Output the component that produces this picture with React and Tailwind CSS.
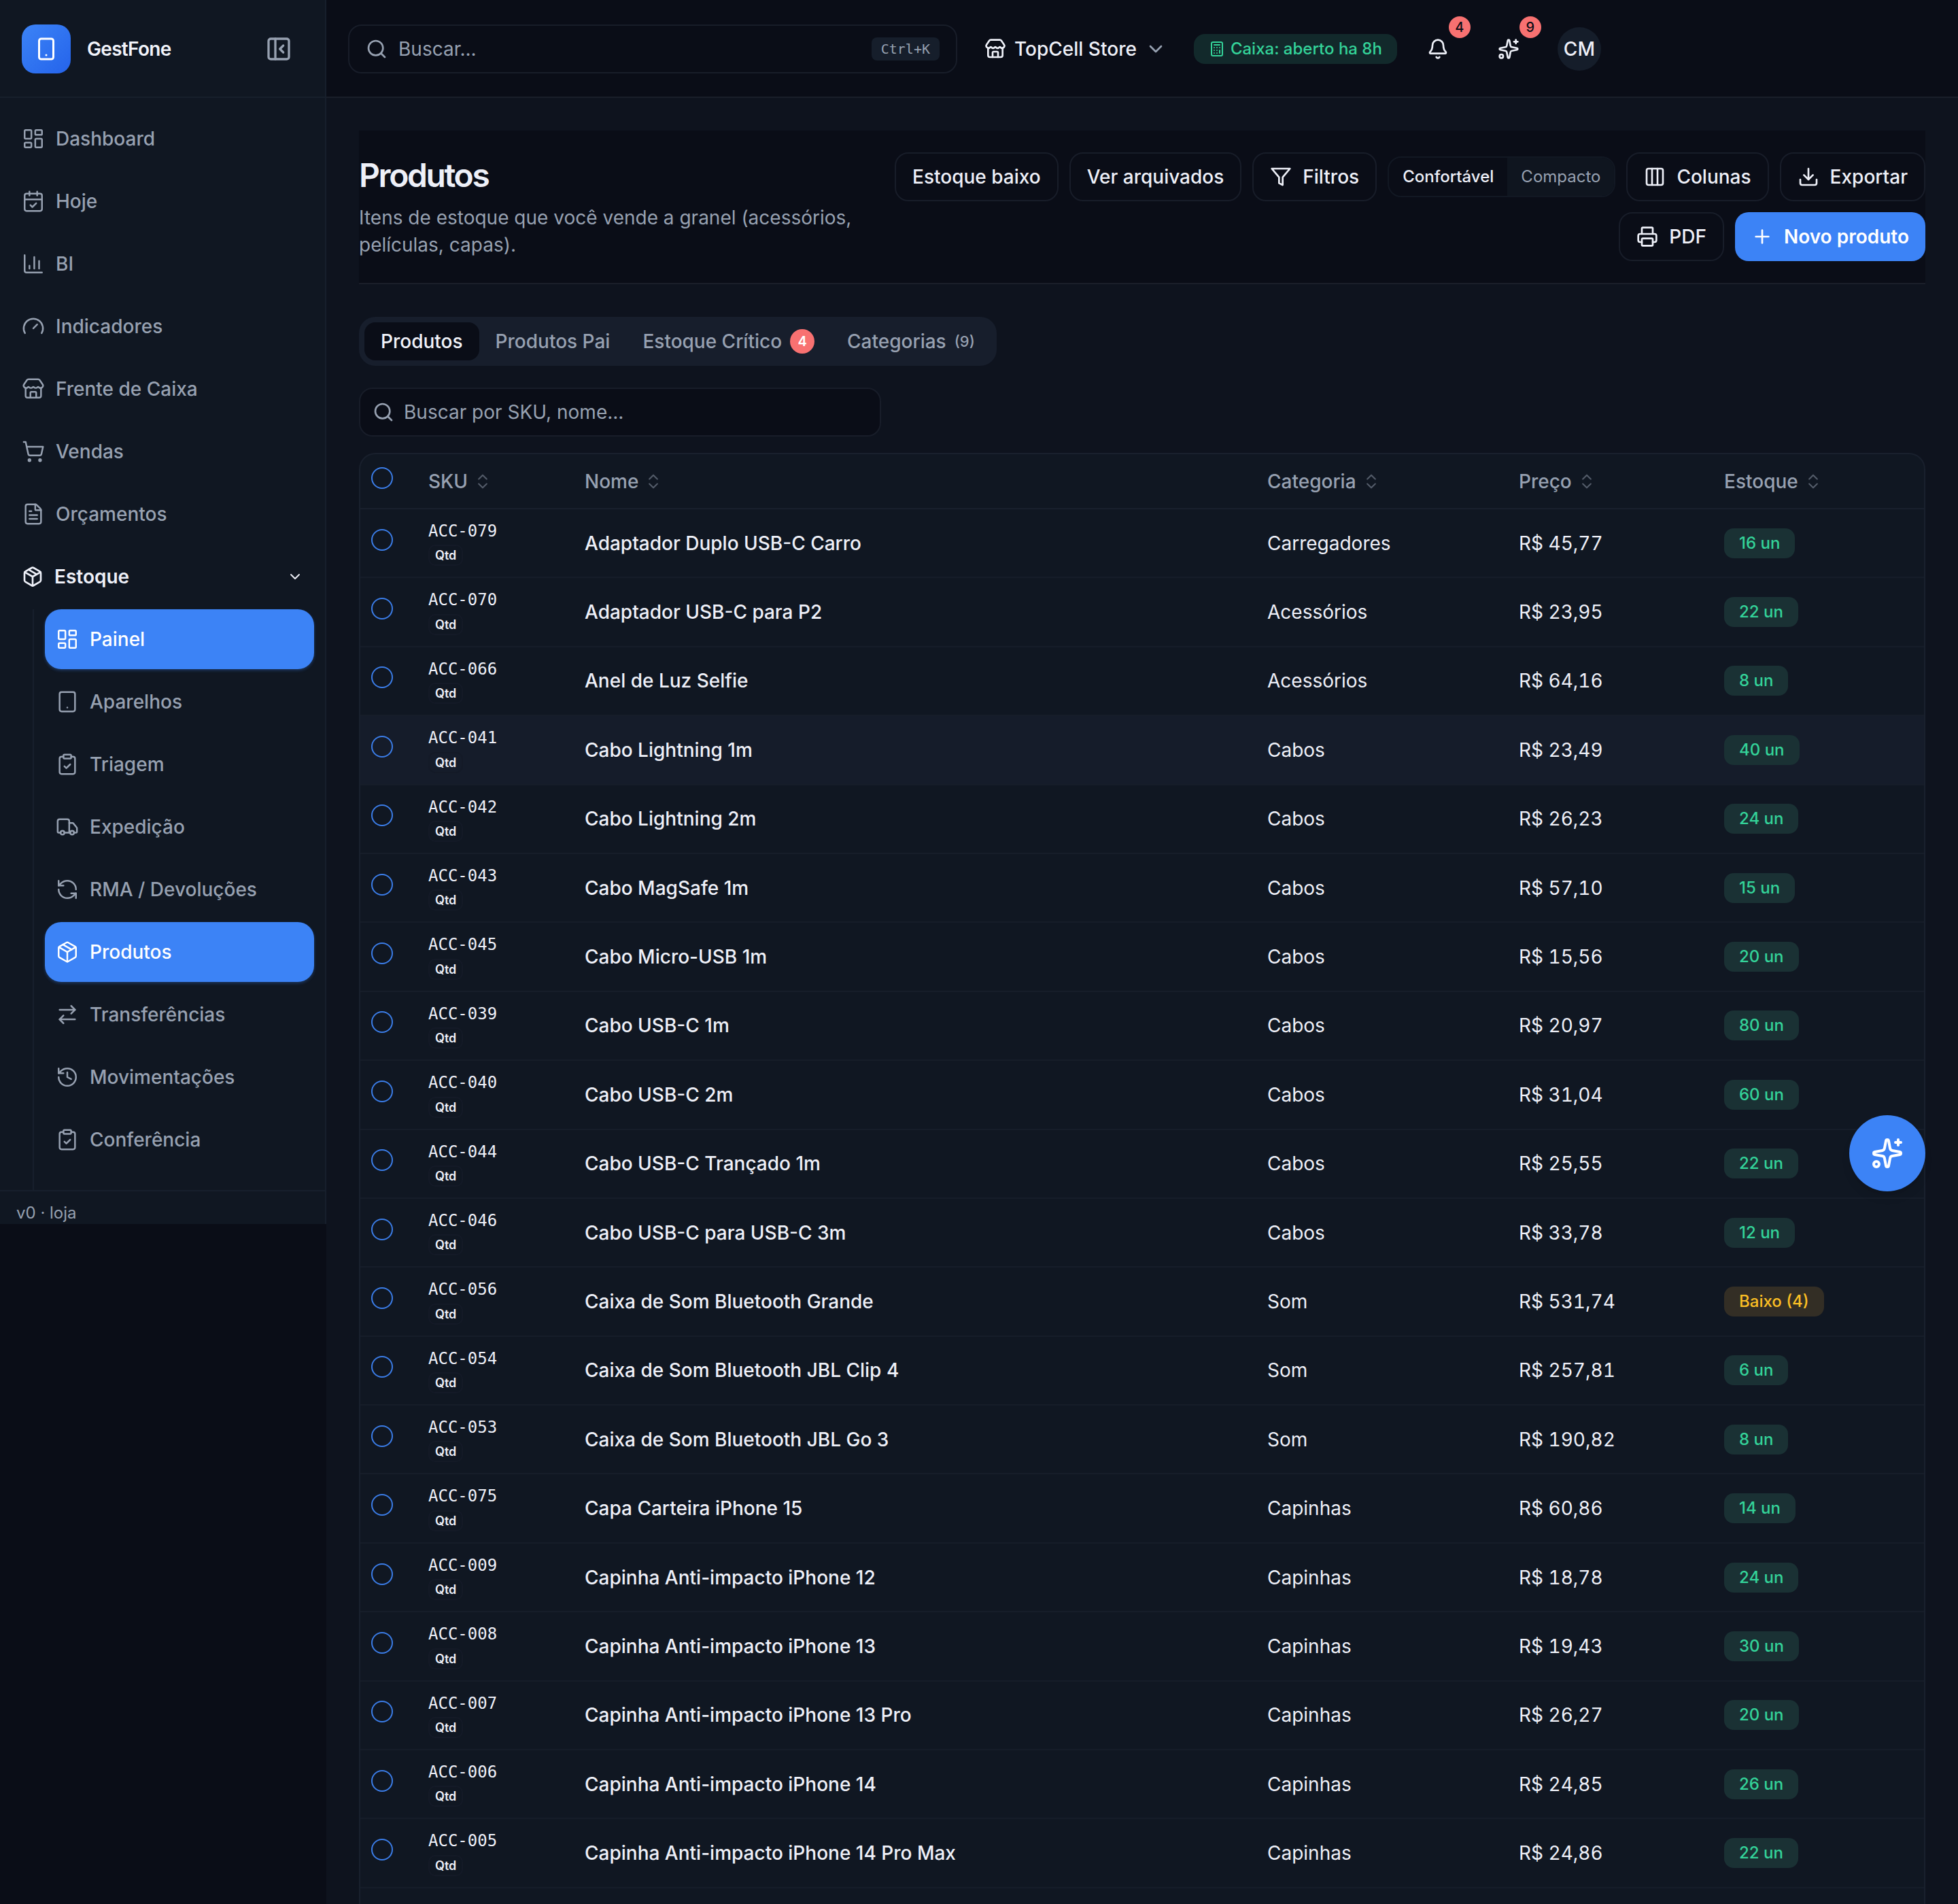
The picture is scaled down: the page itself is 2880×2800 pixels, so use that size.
import {
  ArrowRightLeft,
  Bell,
  Calculator,
  CalendarCheck,
  ChartColumn,
  ChevronDown,
  ChevronsUpDown,
  ClipboardCheck,
  Columns3,
  Download,
  FileText,
  Gauge,
  History,
  LayoutDashboard,
  Package,
  PanelLeftClose,
  Plus,
  Printer,
  RefreshCcw,
  Search,
  ShoppingCart,
  Smartphone,
  Sparkles,
  Store,
  Tablet,
  Truck,
} from "lucide-react";

const NAV = [
  { label: "Dashboard", icon: LayoutDashboard },
  { label: "Hoje", icon: CalendarCheck },
  { label: "BI", icon: ChartColumn },
  { label: "Indicadores", icon: Gauge },
  { label: "Frente de Caixa", icon: Store },
  { label: "Vendas", icon: ShoppingCart },
  { label: "Orçamentos", icon: FileText },
];

const ESTOQUE = [
  { label: "Painel", icon: LayoutDashboard, active: true },
  { label: "Aparelhos", icon: Tablet },
  { label: "Triagem", icon: ClipboardCheck },
  { label: "Expedição", icon: Truck },
  { label: "RMA / Devoluções", icon: RefreshCcw },
  { label: "Produtos", icon: Package, active: true },
  { label: "Transferências", icon: ArrowRightLeft },
  { label: "Movimentações", icon: History },
  { label: "Conferência", icon: ClipboardCheck },
];

const PRODUCTS = [
  { sku: "ACC-079", name: "Adaptador Duplo USB-C Carro", category: "Carregadores", price: "45,77", stock: 16 },
  { sku: "ACC-070", name: "Adaptador USB-C para P2", category: "Acessórios", price: "23,95", stock: 22 },
  { sku: "ACC-066", name: "Anel de Luz Selfie", category: "Acessórios", price: "64,16", stock: 8 },
  { sku: "ACC-041", name: "Cabo Lightning 1m", category: "Cabos", price: "23,49", stock: 40, hover: true },
  { sku: "ACC-042", name: "Cabo Lightning 2m", category: "Cabos", price: "26,23", stock: 24 },
  { sku: "ACC-043", name: "Cabo MagSafe 1m", category: "Cabos", price: "57,10", stock: 15 },
  { sku: "ACC-045", name: "Cabo Micro-USB 1m", category: "Cabos", price: "15,56", stock: 20 },
  { sku: "ACC-039", name: "Cabo USB-C 1m", category: "Cabos", price: "20,97", stock: 80 },
  { sku: "ACC-040", name: "Cabo USB-C 2m", category: "Cabos", price: "31,04", stock: 60 },
  { sku: "ACC-044", name: "Cabo USB-C Trançado 1m", category: "Cabos", price: "25,55", stock: 22 },
  { sku: "ACC-046", name: "Cabo USB-C para USB-C 3m", category: "Cabos", price: "33,78", stock: 12 },
  { sku: "ACC-056", name: "Caixa de Som Bluetooth Grande", category: "Som", price: "531,74", stock: 4, low: true },
  { sku: "ACC-054", name: "Caixa de Som Bluetooth JBL Clip 4", category: "Som", price: "257,81", stock: 6 },
  { sku: "ACC-053", name: "Caixa de Som Bluetooth JBL Go 3", category: "Som", price: "190,82", stock: 8 },
  { sku: "ACC-075", name: "Capa Carteira iPhone 15", category: "Capinhas", price: "60,86", stock: 14 },
  { sku: "ACC-009", name: "Capinha Anti-impacto iPhone 12", category: "Capinhas", price: "18,78", stock: 24 },
  { sku: "ACC-008", name: "Capinha Anti-impacto iPhone 13", category: "Capinhas", price: "19,43", stock: 30 },
  { sku: "ACC-007", name: "Capinha Anti-impacto iPhone 13 Pro", category: "Capinhas", price: "26,27", stock: 20 },
  { sku: "ACC-006", name: "Capinha Anti-impacto iPhone 14", category: "Capinhas", price: "24,85", stock: 26 },
  { sku: "ACC-005", name: "Capinha Anti-impacto iPhone 14 Pro Max", category: "Capinhas", price: "24,86", stock: 22 },
];

const COLUMNS = [
  { label: "SKU", width: "w-[230px]" },
  { label: "Nome", width: "" },
  { label: "Categoria", width: "w-[370px]" },
  { label: "Preço", width: "w-[302px]" },
  { label: "Estoque", width: "w-[310px]" },
];

function FilterIcon({ size }) {
  return (
    <svg width={size} height={size} viewBox="0 0 24 24" fill="none" stroke="currentColor" strokeWidth="2" strokeLinecap="round" strokeLinejoin="round">
      <polygon points="22 3 2 3 10 12.46 10 19 14 21 14 12.46 22 3" />
    </svg>
  );
}

function NavItem({ label, icon: Icon, active }) {
  return (
    <a
      href="#"
      className={`flex h-[88px] items-center gap-4 rounded-[24px] px-4 font-medium ${
        active ? "bg-[#3c83f6] text-white shadow-[0_2px_4px_rgba(60,131,246,0.3)]" : "text-[#97a1b1]"
      }`}
    >
      <Icon size={34} strokeWidth={1.75} className="shrink-0" />
      {label}
    </a>
  );
}

function Sidebar() {
  return (
    <aside className="w-[480px] shrink-0 self-start border-r-2 border-[#171f2c] bg-[#101722]">
      <div className="flex h-36 items-center border-b-2 border-[#171f2c] px-8 pt-0.5">
        <div className="flex size-[72px] items-center justify-center rounded-[20px] bg-linear-to-br from-[#3c83f6] to-[#2563eb] text-white">
          <Smartphone size={36} />
        </div>
        <span className="ml-6 font-semibold tracking-tight text-[#f1f3fa]">GestFone</span>
        <button type="button" aria-label="Recolher menu" className="ml-auto flex size-[72px] items-center justify-center text-[#97a1b1]">
          <PanelLeftClose size={40} />
        </button>
      </div>

      <nav className="flex flex-col gap-1 px-4 pt-4">
        {NAV.map((item) => (
          <NavItem key={item.label} {...item} />
        ))}
        <button type="button" className="flex h-[88px] items-center gap-4 px-4 font-semibold text-[#eef0f8]">
          <Package size={32} />
          Estoque
          <ChevronDown size={24} className="ml-auto" />
        </button>
        <div className="ml-8 flex flex-col gap-1 border-l-2 border-[#171f2c] pb-[30px] pl-4">
          {ESTOQUE.map((item) => (
            <NavItem key={item.label} {...item} />
          ))}
        </div>
      </nav>

      <div className="border-t-2 border-[#171f2c] px-6 pt-4 text-[24px] leading-8 text-[#97a1b1]">v0 · loja</div>
    </aside>
  );
}

function IconButton({ label, icon: Icon, count }) {
  return (
    <button type="button" aria-label={label} className="relative flex size-[72px] items-center justify-center">
      <Icon size={32} />
      <span className="absolute -top-3 -right-3 flex size-8 items-center justify-center rounded-full bg-[#f87171] text-[20px] leading-none font-medium text-[#0a0d17]">
        {count}
      </span>
    </button>
  );
}

function Topbar() {
  return (
    <header className="flex h-36 items-center gap-6 border-b-2 border-[#1a1f2a] bg-[#0a0d17] px-8 pt-0.5">
      <label className="flex h-[72px] w-[896px] items-center gap-4 rounded-[20px] border-2 border-[#181d29] px-6 text-[#97a1b1]">
        <Search size={32} className="shrink-0" />
        <input
          type="text"
          aria-label="Buscar"
          placeholder="Buscar..."
          className="min-w-0 flex-1 bg-transparent outline-none placeholder:text-[#97a1b1]"
        />
        <kbd className="rounded-[8px] bg-[#161e2b] px-[14px] font-['DejaVu_Sans_Mono',monospace] text-[20px] leading-[34px]">
          Ctrl+K
        </kbd>
      </label>

      <button type="button" className="flex h-[72px] items-center gap-3 px-4 font-medium">
        <Store size={32} />
        TopCell Store
        <ChevronDown size={32} className="text-[#97a1b1]" />
      </button>

      <div className="flex h-11 items-center gap-2 rounded-[16px] bg-[#12292b] px-[22px] text-[24px] font-medium text-[#34d399]">
        <Calculator size={24} />
        Caixa: aberto ha 8h
      </div>

      <div className="flex items-center gap-8">
        <IconButton label="Notificações" icon={Bell} count={4} />
        <IconButton label="Sugestões" icon={Sparkles} count={9} />
        <button type="button" className="flex size-[72px] items-center justify-center">
          <span className="flex size-16 items-center justify-center rounded-full bg-[#151d2a] font-medium">CM</span>
        </button>
      </div>
    </header>
  );
}

function OutlineButton({ icon: Icon, children }) {
  return (
    <button
      type="button"
      className="flex h-[72px] items-center gap-4 rounded-[20px] border-2 border-[#181d29] px-6 font-medium"
    >
      {Icon && <Icon size={32} />}
      {children}
    </button>
  );
}

function PageHeader() {
  return (
    <div className="flex items-start justify-between border-b-2 border-[#1a1f2a] bg-[#0a0d17] py-8">
      <div className="w-[760px] shrink-0">
        <h1 className="mt-1 text-[48px] leading-[60px] font-semibold tracking-tighter">Produtos</h1>
        <p className="mt-3 leading-10 text-[#97a1b1]">
          Itens de estoque que você vende a granel (acessórios, películas, capas).
        </p>
      </div>
      <div className="flex max-w-[1530px] flex-wrap items-center justify-end gap-4">
        <OutlineButton>Estoque baixo</OutlineButton>
        <OutlineButton>Ver arquivados</OutlineButton>
        <OutlineButton icon={FilterIcon}>Filtros</OutlineButton>
        <div className="flex h-[60px] overflow-hidden rounded-[20px] border-2 border-[#121823] text-[24px]">
          <button type="button" className="px-5 font-medium">
            Confortável
          </button>
          <button type="button" className="bg-[#0f151f] px-5 text-[#97a1b1]">
            Compacto
          </button>
        </div>
        <OutlineButton icon={Columns3}>Colunas</OutlineButton>
        <OutlineButton icon={Download}>Exportar</OutlineButton>
        <OutlineButton icon={Printer}>PDF</OutlineButton>
        <button type="button" className="flex h-[72px] items-center gap-4 rounded-[20px] bg-[#3c83f6] px-6 font-semibold text-white">
          <Plus size={32} />
          Novo produto
        </button>
      </div>
    </div>
  );
}

function Tabs() {
  return (
    <div role="tablist" className="mt-12 flex h-[72px] items-center self-start rounded-[24px] bg-[#171e2c] p-2 font-medium text-[#97a1b1]">
      <button type="button" role="tab" aria-selected="true" className="h-14 rounded-[16px] bg-[#0a0d17] px-6 text-[#f1f3fa]">
        Produtos
      </button>
      <button type="button" role="tab" className="h-14 px-6">
        Produtos Pai
      </button>
      <button type="button" role="tab" className="flex h-14 items-center gap-3 px-6">
        Estoque Crítico
        <span className="flex size-9 items-center justify-center rounded-full bg-[#f87171] text-[20px] font-semibold text-white">4</span>
      </button>
      <button type="button" role="tab" className="flex h-14 items-center gap-3 px-6">
        Categorias
        <span className="text-[22px]">(9)</span>
      </button>
    </div>
  );
}

function RowCheckbox({ label }) {
  return (
    <input
      type="checkbox"
      aria-label={label}
      className="inline-block size-8 appearance-none rounded-full border-2 border-[#3b7de8] align-baseline checked:bg-[#3c83f6]"
    />
  );
}

function ProductTable() {
  return (
    <div className="mt-6 flex-1 overflow-hidden rounded-t-[24px] border-2 border-b-0 border-[#19202d] bg-[#101722]">
      <table className="w-full table-fixed text-left">
        <thead>
          <tr className="h-20 border-b-2 border-[#19202d] text-[#97a1b1]">
            <th className="w-[84px] px-4 font-medium">
              <RowCheckbox label="Selecionar todos" />
            </th>
            {COLUMNS.map((col) => (
              <th key={col.label} className={`px-4 font-medium ${col.width}`}>
                <button type="button" className="flex items-center gap-2">
                  {col.label}
                  <ChevronsUpDown size={28} strokeWidth={1.75} className="opacity-50" />
                </button>
              </th>
            ))}
          </tr>
        </thead>
        <tbody>
          {PRODUCTS.map((p) => (
            <tr key={p.sku} className={`border-b-2 border-[#161d29] ${p.hover ? "bg-[#151c2a]" : ""}`}>
              <td className="px-4">
                <RowCheckbox label={`Selecionar ${p.name}`} />
              </td>
              <td className="p-4">
                <div className="font-['DejaVu_Sans_Mono',monospace] text-[24px] leading-[1.35]">{p.sku}</div>
                <div className="mt-1 w-fit rounded-[10px] border-2 border-[#141a27] px-2 text-[18px] leading-normal font-semibold">
                  Qtd
                </div>
              </td>
              <td className="px-4 font-medium">{p.name}</td>
              <td className="px-4">{p.category}</td>
              <td className="px-4 tabular-nums">R$ {p.price}</td>
              <td className="px-4">
                <span
                  className={`flex h-11 w-fit items-center rounded-[14px] px-[22px] text-[24px] font-medium ${
                    p.low ? "bg-[#332e25] text-[#fbbf24]" : "bg-[#1a3134] text-[#34d399]"
                  }`}
                >
                  {p.low ? `Baixo (${p.stock})` : `${p.stock} un`}
                </span>
              </td>
            </tr>
          ))}
        </tbody>
      </table>
    </div>
  );
}

export default function App() {
  return (
    <div className="relative flex min-h-screen bg-[#0a0d17] font-[Inter,sans-serif] text-[28px] leading-10 text-[#eef0f8]">
      <Sidebar />
      <div className="flex min-w-0 flex-1 flex-col bg-[#0e131e]">
        <Topbar />
        <main className="flex flex-1 flex-col px-12 pt-12">
          <PageHeader />
          <Tabs />
          <label className="mt-8 flex h-[72px] w-[768px] items-center gap-[14px] rounded-[20px] border-2 border-[#181d29] bg-[#0a0d17] px-[18px] text-[#97a1b1]">
            <Search size={32} className="shrink-0" />
            <input
              type="text"
              aria-label="Buscar produto"
              placeholder="Buscar por SKU, nome..."
              className="min-w-0 flex-1 bg-transparent outline-none placeholder:text-[#97a1b1]"
            />
          </label>
          <ProductTable />
        </main>
      </div>

      <button
        type="button"
        aria-label="Assistente"
        className="absolute top-[1640px] right-12 flex size-28 items-center justify-center rounded-full bg-[#3c83f6] text-white shadow-lg"
      >
        <Sparkles size={48} />
      </button>
    </div>
  );
}
